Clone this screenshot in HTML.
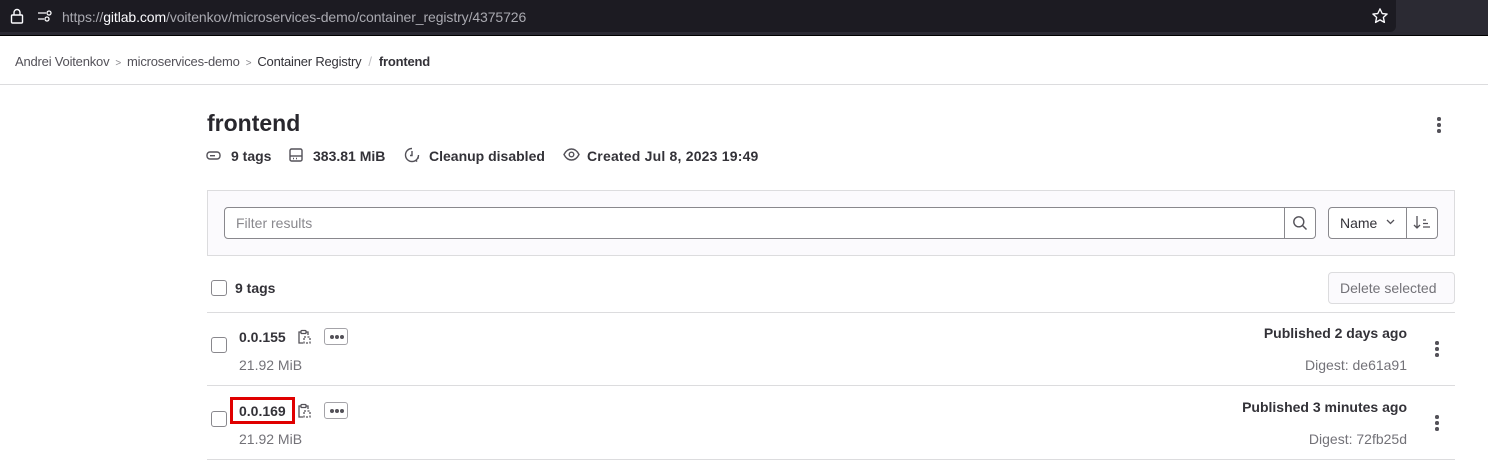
<!DOCTYPE html>
<html><head><meta charset="utf-8"><style>
*{box-sizing:border-box;margin:0;padding:0}
body{width:1488px;height:461px;overflow:hidden;background:#fff;font-family:"Liberation Sans",sans-serif;color:#333238;position:relative}
.a{position:absolute;white-space:nowrap}
.b{font-weight:bold}
.g{color:#737278}
.cb{position:absolute;width:16px;height:16px;border:1px solid #89888d;border-radius:3px;background:#fff}
.line{position:absolute;height:1px;background:#dcdcde}
.kebab{position:absolute;width:4px}
.kebab i{display:block;width:3.5px;height:3.5px;border-radius:50%;background:#535158;margin-bottom:2.5px}
.dots{position:absolute;width:24px;height:17px;border:1px solid #a4a3a8;border-radius:3px}
.dots i{position:absolute;top:6px;width:4px;height:4px;border-radius:50%;background:#535158}
</style></head><body>
<div class="a" style="left:0;top:0;width:1488px;height:35px;background:#2b2a33"></div>
<div class="a" style="left:0;top:0;width:1396px;height:32px;background:#1c1b22;border-radius:0 0 6px 0"></div>
<div class="a" style="left:0;top:35px;width:1488px;height:1px;background:#000"></div>
<svg class="a" style="left:10px;top:8px" width="14" height="16" viewBox="0 0 14 16"><rect x="1.5" y="7" width="11" height="8" rx="1" fill="none" stroke="#fbfbfe" stroke-width="1.4"/><path d="M4 7V4.5a3 3 0 0 1 6 0V7" fill="none" stroke="#fbfbfe" stroke-width="1.4"/></svg>
<svg class="a" style="left:37px;top:10px" width="16" height="12" viewBox="0 0 16 12"><path d="M1 3h8M1 9h6" stroke="#fbfbfe" stroke-width="1.3"/><circle cx="12" cy="3" r="2" fill="none" stroke="#fbfbfe" stroke-width="1.3"/><circle cx="10" cy="9" r="2" fill="none" stroke="#fbfbfe" stroke-width="1.3"/></svg>
<div class="a" style="left:62px;top:9px;font-size:14px;letter-spacing:-0.1px;color:#a9a9b0">https://<span style="color:#fbfbfe">gitlab.com</span>/voitenkov/microservices-demo/container_registry/4375726</div>
<svg class="a" style="left:1371px;top:7px" width="18" height="18" viewBox="0 0 24 24"><path d="M12 2.5l2.9 6.2 6.6.7-5 4.5 1.4 6.6L12 17.2l-5.9 3.3 1.4-6.6-5-4.5 6.6-.7z" fill="none" stroke="#fbfbfe" stroke-width="1.8" stroke-linejoin="round"/></svg>

<div class="a" style="left:15px;top:54px;font-size:13px;letter-spacing:-0.2px;color:#535158">Andrei Voitenkov<span style="color:#89888d;font-size:10px;margin:0 6px">&gt;</span>microservices-demo<span style="color:#89888d;font-size:10px;margin:0 6px">&gt;</span><span style="color:#333238">Container Registry</span><span style="color:#bfbfc3;margin:0 7px">/</span><span class="b" style="color:#333238">frontend</span></div>
<div class="line" style="left:0;top:84px;width:1488px"></div>

<div class="a b" style="left:207px;top:110px;font-size:23px;color:#28272d">frontend</div>
<div class="kebab" style="left:1437px;top:117px"><i></i><i></i><i></i></div>
<svg class="a" style="left:206px;top:150px" width="16" height="12" viewBox="0 0 16 12"><rect x="1" y="2" width="13" height="7" rx="3" fill="none" stroke="#535158" stroke-width="1.4"/><rect x="4" y="5" width="5" height="1.4" fill="#535158"/></svg>
<div class="a b" style="left:231px;top:148px;font-size:14px">9 tags</div>
<svg class="a" style="left:289px;top:148px" width="14" height="15" viewBox="0 0 14 15"><rect x="1" y="1" width="12" height="12" rx="1.5" fill="none" stroke="#535158" stroke-width="1.4"/><path d="M1 8h12" stroke="#535158" stroke-width="1.4"/><path d="M4 10.5h1M7 10.5h1" stroke="#535158" stroke-width="1.4"/></svg>
<div class="a b" style="left:313px;top:148px;font-size:14px">383.81 MiB</div>
<svg class="a" style="left:404px;top:147px" width="16" height="16" viewBox="0 0 16 16"><path d="M8 1.5a6.5 6.5 0 1 0 6.5 6.5" fill="none" stroke="#535158" stroke-width="1.4"/><path d="M8 4v4.5h-2" fill="none" stroke="#535158" stroke-width="1.4"/><circle cx="14" cy="11" r=".9" fill="#535158"/><circle cx="12.5" cy="14" r=".9" fill="#535158"/></svg>
<div class="a b" style="left:429px;top:148px;font-size:14px">Cleanup disabled</div>
<svg class="a" style="left:563px;top:148px" width="17" height="13" viewBox="0 0 17 13"><path d="M1 6.5C3 2.5 6 1 8.5 1S14 2.5 16 6.5C14 10.5 11 12 8.5 12S3 10.5 1 6.5z" fill="none" stroke="#535158" stroke-width="1.4"/><circle cx="8.5" cy="6.5" r="2.3" fill="none" stroke="#535158" stroke-width="1.4"/></svg>
<div class="a b" style="left:587px;top:148px;font-size:14px;letter-spacing:0.2px">Created Jul 8, 2023 19:49</div>

<div class="a" style="left:207px;top:190px;width:1248px;height:66px;background:#fbfafd;border:1px solid #dcdcde"></div>
<div class="a" style="left:224px;top:207px;width:1092px;height:32px;background:#fff;border:1px solid #89888d;border-radius:4px"></div>
<div class="a" style="left:236px;top:215px;font-size:14px;color:#89888d">Filter results</div>
<div class="a" style="left:1284px;top:207px;width:1px;height:32px;background:#89888d"></div>
<svg class="a" style="left:1292px;top:215px" width="16" height="16" viewBox="0 0 16 16"><circle cx="6.8" cy="6.8" r="5" fill="none" stroke="#535158" stroke-width="1.4"/><path d="M10.5 10.5L14.5 14.5" stroke="#535158" stroke-width="1.5"/></svg>
<div class="a" style="left:1328px;top:207px;width:110px;height:32px;background:#fff;border:1px solid #89888d;border-radius:4px"></div>
<div class="a" style="left:1340px;top:215px;font-size:14px">Name</div>
<svg class="a" style="left:1386px;top:219px" width="9" height="6" viewBox="0 0 9 6"><path d="M1 1l3.5 3.5L8 1" fill="none" stroke="#535158" stroke-width="1.3"/></svg>
<div class="a" style="left:1406px;top:207px;width:1px;height:32px;background:#89888d"></div>
<svg class="a" style="left:1413px;top:215px" width="18" height="15" viewBox="0 0 18 15"><path d="M4 1v12M1 10l3 3 3-3" fill="none" stroke="#535158" stroke-width="1.3"/><path d="M10 5h3M10 8.5h5M10 12h7" stroke="#535158" stroke-width="1.2"/></svg>

<div class="cb" style="left:211px;top:280px"></div>
<div class="a b" style="left:235px;top:280px;font-size:14px">9 tags</div>
<div class="a" style="left:1328px;top:272px;width:127px;height:32px;background:#fbfafd;border:1px solid #dcdcde;border-radius:4px"></div>
<div class="a" style="left:1340px;top:280px;font-size:14px;color:#737278">Delete selected</div>
<div class="line" style="left:207px;top:312px;width:1248px"></div>

<div class="cb" style="left:211px;top:337px"></div>
<div class="a b" style="left:239px;top:329px;font-size:14px">0.0.155</div>
<svg class="a" style="left:297px;top:329px" width="14" height="16" viewBox="0 0 14 16"><path d="M4 3H2v11h4" fill="none" stroke="#535158" stroke-width="1.3"/><rect x="4" y="1.5" width="5" height="3" rx=".8" fill="none" stroke="#535158" stroke-width="1.3"/><path d="M9 3h2v3" fill="none" stroke="#535158" stroke-width="1.3"/><rect x="7" y="8" width="6" height="6" fill="none" stroke="#535158" stroke-width="1.3" stroke-dasharray="2 1.5"/></svg>
<div class="dots" style="left:324px;top:328px"><i style="left:5px"></i><i style="left:10px"></i><i style="left:15px"></i></div>
<div class="a" style="left:239px;top:357px;font-size:14px;color:#737278">21.92 MiB</div>
<div class="a b" style="right:81px;top:325px;font-size:14px">Published 2 days ago</div>
<div class="a g" style="right:81px;top:357px;font-size:14px">Digest: de61a91</div>
<div class="kebab" style="left:1435px;top:341px"><i></i><i></i><i></i></div>
<div class="line" style="left:207px;top:385px;width:1248px"></div>

<div class="cb" style="left:211px;top:411px"></div>
<div class="a" style="left:230px;top:397px;width:65px;height:27px;border:3px solid #e00000"></div>
<div class="a b" style="left:239px;top:403px;font-size:14px">0.0.169</div>
<svg class="a" style="left:297px;top:403px" width="14" height="16" viewBox="0 0 14 16"><path d="M4 3H2v11h4" fill="none" stroke="#535158" stroke-width="1.3"/><rect x="4" y="1.5" width="5" height="3" rx=".8" fill="none" stroke="#535158" stroke-width="1.3"/><path d="M9 3h2v3" fill="none" stroke="#535158" stroke-width="1.3"/><rect x="7" y="8" width="6" height="6" fill="none" stroke="#535158" stroke-width="1.3" stroke-dasharray="2 1.5"/></svg>
<div class="dots" style="left:324px;top:402px"><i style="left:5px"></i><i style="left:10px"></i><i style="left:15px"></i></div>
<div class="a" style="left:239px;top:431px;font-size:14px;color:#737278">21.92 MiB</div>
<div class="a b" style="right:81px;top:399px;font-size:14px">Published 3 minutes ago</div>
<div class="a g" style="right:81px;top:431px;font-size:14px">Digest: 72fb25d</div>
<div class="kebab" style="left:1435px;top:415px"><i></i><i></i><i></i></div>
<div class="line" style="left:207px;top:459px;width:1248px"></div>
</body></html>
